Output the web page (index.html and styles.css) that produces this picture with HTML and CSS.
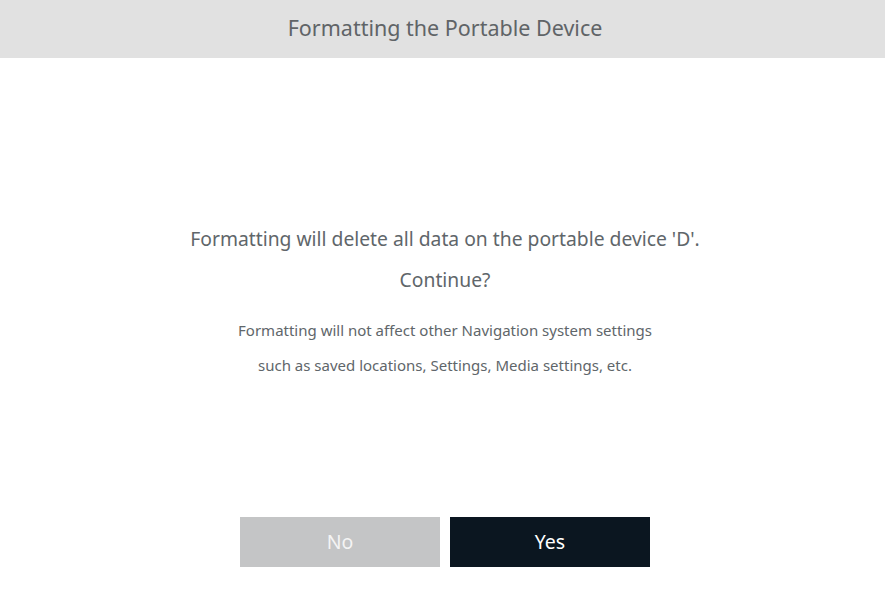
FILE: index.html
```html
<!DOCTYPE html>
<html>
<head>
<meta charset="utf-8">
<link rel="stylesheet" href="styles.css">
</head>
<body>
<div class="screen">
  <header class="header">Formatting the Portable Device</header>
  <main class="content">
    <p class="main-line first">Formatting will delete all data on the portable device 'D'.</p>
    <p class="main-line second">Continue?</p>
    <p class="sub-line first-sub">Formatting will not affect other Navigation system settings</p>
    <p class="sub-line second-sub">such as saved locations, Settings, Media settings, etc.</p>
  </main>
  <div class="buttons">
    <button class="btn btn-no">No</button>
    <button class="btn btn-yes">Yes</button>
  </div>
</div>
</body>
</html>
```
FILE: styles.css
```css
* { box-sizing: border-box; }
html, body { margin: 0; padding: 0; background: #ffffff; }
body { width: 885px; height: 612px; overflow: hidden; font-family: "Noto Sans", "Open Sans", sans-serif; }
.screen { display: flex; flex-direction: column; height: 612px; }
.header {
  height: 58px;
  background: #e1e1e1;
  color: #606467;
  font-size: 21.5px;
  display: flex;
  align-items: center;
  justify-content: center;
  padding: 0 0 3px 5px;
}
.content {
  display: flex;
  flex-direction: column;
  align-items: center;
  padding: 168px 0 0 5px;
  height: 459px;
}
.content p { margin: 0; }
.main-line { font-size: 19.3px; color: #60666a; line-height: 26px; }
.main-line.second { margin-top: 15px; }
.sub-line { font-size: 15px; color: #60666a; line-height: 20px; }
.sub-line.first-sub { margin-top: 27px; }
.sub-line.second-sub { margin-top: 15px; }
.buttons {
  display: flex;
  justify-content: center;
  gap: 10px;
  padding-left: 5px;
}
.btn {
  width: 200px;
  height: 50px;
  border: none;
  font-family: inherit;
  font-size: 19.5px;
  color: #ffffff;
  padding: 0 0 2px 0;
}
.btn-no { background: #c4c5c6; color: #f4f4f4; }
.btn-yes { background: #0b1620; }
```
